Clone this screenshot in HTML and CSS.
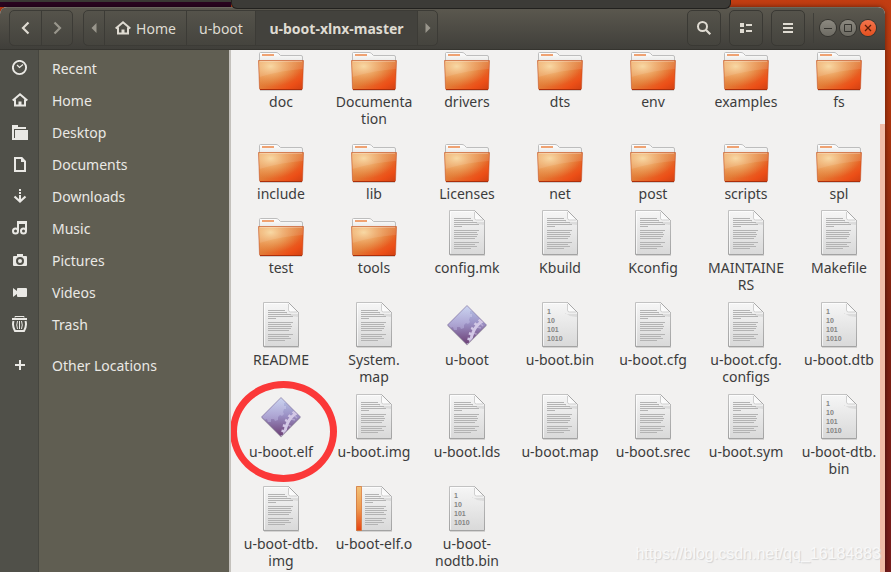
FILE: index.html
```
<!DOCTYPE html>
<html lang="en">
<head>
<meta charset="utf-8">
<title>u-boot-xlnx-master</title>
<link rel="stylesheet" href="styles.css">
</head>
<body>
<svg class="defs" width="0" height="0" aria-hidden="true">
  <defs>
    <linearGradient id="gFolder" x1="0" y1="0" x2="1" y2="1"><stop offset="0" stop-color="#eda05c"/><stop offset=".5" stop-color="#e27a35"/><stop offset=".8" stop-color="#ec4f17"/><stop offset="1" stop-color="#d04012"/></linearGradient>
    <radialGradient id="gGlow" cx=".27" cy=".2" r=".7"><stop offset="0" stop-color="#f7d59b"/><stop offset="1" stop-color="#f0a45c" stop-opacity="0"/></radialGradient>
    <linearGradient id="gTab" x1="0" y1="0" x2="0" y2="1"><stop offset="0" stop-color="#fff"/><stop offset="1" stop-color="#dededc"/></linearGradient>
    <linearGradient id="gPage" x1="0" y1="0" x2="0" y2="1"><stop offset="0" stop-color="#f6f6f6"/><stop offset="1" stop-color="#d9d9d9"/></linearGradient>
    <linearGradient id="gEdge" x1="0" y1="0" x2="0" y2="1"><stop offset="0" stop-color="#c2c2c2"/><stop offset="1" stop-color="#a3a3a3"/></linearGradient>
    <linearGradient id="gCurl" x1="0" y1="1" x2="1" y2="0"><stop offset="0" stop-color="#fff"/><stop offset=".5" stop-color="#f8f8f8"/><stop offset="1" stop-color="#cfcfcf"/></linearGradient>
    <linearGradient id="gSpine" x1="0" y1="0" x2="0" y2="1"><stop offset="0" stop-color="#f2c277"/><stop offset=".5" stop-color="#ee9a50"/><stop offset="1" stop-color="#e64313"/></linearGradient>
    <linearGradient id="gGem" x1="0" y1="0" x2="0" y2="1"><stop offset="0" stop-color="#b9c8ea"/><stop offset=".45" stop-color="#9c92c6"/><stop offset="1" stop-color="#6c3f74"/></linearGradient>
    <linearGradient id="gGear" x1="0" y1="0" x2="0" y2="1"><stop offset="0" stop-color="#e0e8fb"/><stop offset="1" stop-color="#b4abd9"/></linearGradient>
    <clipPath id="cGem"><path d="M24 4.500 43.500 24 24 43.500 4.500 24Z"/></clipPath>
  </defs>
  <symbol id="folder" viewBox="0 0 48 48">
    <path d="M3 47.500h42" stroke="#000" stroke-opacity=".15" stroke-width="1"/>
    <path d="M2.500 22V10.500q0-1 1-1H19q1.500 0 2.500 1l2 2H44q1.500 0 1.500 1.500V22Z" fill="url(#gTab)" stroke="#bdbdbd"/>
    <path d="M5 11H17V13H5Z" fill="#efa272"/>
    <path d="M1.500 17.500H46.500L45.500 45.500q0 1-1 1H3.500Q2.500 46.500 2.500 45.500Z" fill="url(#gFolder)"/>
    <path d="M1.500 17.500H46.500L45.500 45.500q0 1-1 1H3.500Q2.500 46.500 2.500 45.500Z" fill="url(#gGlow)"/>
    <path d="M2 18H46V26Q26 27 2.500 34Z" fill="#fff" fill-opacity=".1"/>
    <path d="M1.500 17.500H46.500L45.500 45.500q0 1-1 1H3.500Q2.500 46.500 2.500 45.500Z" fill="none" stroke="#bd4318" stroke-opacity=".5"/>
    <path d="M3 18.500H45" stroke="#fff" stroke-opacity=".25"/>
    <path d="M3 46.500H45" stroke="#ac2e0a"/>
  </symbol>
  <symbol id="page" viewBox="0 0 48 48">
    <path d="M7 46.500h35" stroke="#000" stroke-opacity=".12"/>
    <path d="M6.500 1.500H31.500L41.500 11.500V45.500H6.500Z" fill="url(#gPage)" stroke="url(#gEdge)"/>
    <path d="M7.500 44.500V2.500H30" fill="none" stroke="#fff" stroke-opacity=".7"/>
    <path d="M29 4V13H41V16L34 15 29 12Z" fill="#888" fill-opacity=".18"/>
    <path d="M31.500 2V9q0 2 2 2H41.500Z" fill="url(#gCurl)"/>
    <path d="M31.500 1.500 41.500 11.500" stroke="#a8a8a8" fill="none"/>
    <path d="M31.500 3V9q0 2 2 2H40" stroke="#cfcfcf" fill="none"/>
  </symbol>
  <symbol id="text" viewBox="0 0 48 48">
    <use href="#page"/>
    <path d="M11 9.500H28M11 11.500H30M11 13.500H34M11 15.500H36M11 17.500H19M11 21.500H36M11 23.500H34M11 25.500H35M11 27.500H34M11 29.500H32M11 33.500H36M11 35.500H32M11 37.500H34M11 39.500H28" stroke="#b3b3b3"/>
  </symbol>
  <symbol id="object" viewBox="0 0 48 48">
    <use href="#page"/>
    <path d="M6.500 1.500h5v44h-5Z" fill="url(#gSpine)" stroke="#d9702f" stroke-opacity=".7"/>
    <path d="M15 9.500H29M15 11.500H31M15 13.500H34M15 15.500H36M15 17.500H23M15 21.500H36M15 23.500H34M15 25.500H37M15 27.500H34M15 29.500H36M15 33.500H36M15 35.500H32M15 37.500H34M15 39.500H28" stroke="#b3b3b3"/>
  </symbol>
  <symbol id="program" viewBox="0 0 48 48">
    <path d="M24 5.500 43.500 25 24 44.500 4.500 25Z" fill="#000" fill-opacity=".2"/>
    <path d="M24 4.500 43.500 24 24 43.500 4.500 24Z" fill="url(#gGem)"/>
    <g clip-path="url(#cGem)">
      <path d="M4 0H27V7h2v3h-2v3h2v3h-2l-1 3 1 2-2 2-2-1-2 2v3l-3 1-1-2h-3v3h-3l-1-3-3 1v3H4Z" fill="url(#gGear)" fill-opacity=".55"/>
      <path d="M45 18Q29 22 27 45" fill="none" stroke="#d3c8e6" stroke-width="3"/>
      <path d="M43 17Q27 21 25 45" fill="none" stroke="#d3c8e6" stroke-width="3" stroke-dasharray="2.500 3"/>
      <path d="M34 26l4 1M31 32l4 2M37 22l3 3" stroke="#d3c8e6" stroke-width="1.500" stroke-opacity=".5"/>
    </g>
    <path d="M24 4.500 43.500 24 24 43.500 4.500 24Z" fill="none" stroke="#6a5386" stroke-opacity=".5" stroke-linejoin="round"/>
  </symbol>
  <symbol id="house" viewBox="0 0 16 16">
    <path d="M.7 8.500 8 2.300 15.300 8.500M3 7.500V13.500H13V7.500" fill="none" stroke="currentColor" stroke-width="2"/>
    <path d="M6.500 13.500V9.500h3v4Z" fill="currentColor"/>
  </symbol>
</svg>

<div class="topbar"></div>
<div class="panel"></div>
<main class="window">
  <header class="header">
    <div class="group">
      <button class="nav" aria-label="Back"><svg width="16" height="16" viewBox="0 0 16 16"><path d="M10.500 2.500 5 8 10.500 13.500" fill="none" stroke="currentColor" stroke-width="2.200"/></svg></button>
      <button class="nav dim" aria-label="Forward"><svg width="16" height="16" viewBox="0 0 16 16"><path d="M5.500 2.500 11 8 5.500 13.500" fill="none" stroke="currentColor" stroke-width="2.200"/></svg></button>
    </div>
    <nav class="group path">
      <button class="step dim" aria-label="Scroll left"><svg width="6" height="10" viewBox="0 0 6 10"><path d="M5.500 0V10L.5 5Z" fill="currentColor"/></svg></button>
      <button class="crumb home"><svg width="16" height="16"><use href="#house"/></svg>Home</button>
      <button class="crumb parent">u-boot</button>
      <button class="crumb current">u-boot-xlnx-master</button>
      <button class="step dim" aria-label="Scroll right"><svg width="6" height="10" viewBox="0 0 6 10"><path d="M.5 0V10L5.500 5Z" fill="currentColor"/></svg></button>
    </nav>
    <div class="tools">
      <button class="tool" aria-label="Search"><svg width="16" height="16" viewBox="0 0 16 16"><circle cx="6.500" cy="6.500" r="4.500" fill="none" stroke="currentColor" stroke-width="2"/><path d="M9.800 9.800 14.300 14.300" stroke="currentColor" stroke-width="2.200"/></svg></button>
      <button class="tool" aria-label="View"><svg width="16" height="16" viewBox="0 0 16 16"><path d="M2 3h4v4H2ZM2 9h4v4H2ZM8 4h6v2H8ZM8 10h6v2H8Z" fill="currentColor"/></svg></button>
      <button class="tool" aria-label="Menu"><svg width="16" height="16" viewBox="0 0 16 16"><path d="M3 3h10v2H3ZM3 7h10v2H3ZM3 11h10v2H3Z" fill="currentColor"/></svg></button>
    </div>
    <div class="controls">
      <button class="ctl" aria-label="Minimize"><svg width="10" height="10" viewBox="0 0 10 10"><path d="M1 5.500H9" stroke="currentColor"/></svg></button>
      <button class="ctl" aria-label="Maximize"><svg width="10" height="10" viewBox="0 0 10 10"><path d="M1.500 1.500h7v7h-7Z" fill="none" stroke="currentColor"/></svg></button>
      <button class="ctl close" aria-label="Close"><svg width="10" height="10" viewBox="0 0 10 10"><path d="M2 2 8 8M8 2 2 8" stroke="currentColor" stroke-width="1.300"/></svg></button>
    </div>
  </header>
  <div class="body">
    <aside class="sidebar">
      <a class="place" href="#"><svg viewBox="0 0 16 16"><circle cx="7.500" cy="7.500" r="6.600" fill="none" stroke="currentColor" stroke-width="1.900"/><path d="M5 5 7.500 7.500 11 4.500" fill="none" stroke="currentColor" stroke-width="1.200"/></svg>Recent</a>
      <a class="place" href="#"><svg><use href="#house"/></svg>Home</a>
      <a class="place" href="#"><svg viewBox="0 0 16 16"><path d="M0 1H6V3H14V5H2V15H0Z" fill="currentColor"/><path d="M3 6H16V16H0V14H3Z" fill="currentColor"/></svg>Desktop</a>
      <a class="place" href="#"><svg viewBox="0 0 16 16"><path d="M3 2H9.500L13 5.500V15H3Z" fill="none" stroke="currentColor" stroke-width="2"/><path d="M9 1V6H14L10 1Z" fill="currentColor"/></svg>Documents</a>
      <a class="place" href="#"><svg viewBox="0 0 16 16"><path d="M8 1V3M8 4V6M8 7V13" stroke="currentColor" stroke-width="2"/><path d="M2.500 8.500 8 13.500 13.500 8.500" fill="none" stroke="currentColor" stroke-width="2.200"/></svg>Downloads</a>
      <a class="place" href="#"><svg viewBox="0 0 16 16"><path d="M6 11V2H14V11" fill="none" stroke="currentColor" stroke-width="2"/><path d="M6 3H14" stroke="currentColor" stroke-width="2"/><circle cx="3.500" cy="11" r="2.500" fill="none" stroke="currentColor" stroke-width="2"/><circle cx="11.500" cy="11" r="2.500" fill="none" stroke="currentColor" stroke-width="2"/></svg>Music</a>
      <a class="place" href="#"><svg viewBox="0 0 16 16"><path fill-rule="evenodd" d="M5 2H11V4H14Q15 4 15 5V13Q15 14 14 14H2Q1 14 1 13V5Q1 4 2 4H5ZM8 5A4 4 0 1 0 8 13 4 4 0 1 0 8 5Z" fill="currentColor"/><circle cx="8" cy="9" r="2" fill="currentColor"/></svg>Pictures</a>
      <a class="place" href="#"><svg viewBox="0 0 16 16"><path d="M6 4H14Q15 4 15 5V12Q15 13 14 13H6Q5 13 5 12V10L1 13V4L5 7V5Q5 4 6 4Z" fill="currentColor"/></svg>Videos</a>
      <a class="place" href="#"><svg viewBox="0 0 16 16"><path d="M0 3H15" stroke="currentColor" stroke-width="2"/><path d="M3 1.500V.5H12V1.500" fill="none" stroke="currentColor"/><path d="M1.500 5Q0 10 3 15H12Q15 10 13.500 5" fill="none" stroke="currentColor" stroke-width="2"/><path d="M5.500 5Q4 9 5.500 13M7.500 5V13M9.500 5Q11 9 9.500 13" fill="none" stroke="currentColor"/></svg>Trash</a>
      <a class="place other" href="#"><svg viewBox="0 0 16 16"><path d="M8 3V13M3 8H13" stroke="currentColor" stroke-width="2"/></svg>Other Locations</a>
    </aside>
    <section class="content">
      <div class="files">
        <figure class="file"><svg><use href="#folder"/></svg><figcaption>doc</figcaption></figure>
        <figure class="file"><svg><use href="#folder"/></svg><figcaption class="tall">Documenta<br>tion</figcaption></figure>
        <figure class="file"><svg><use href="#folder"/></svg><figcaption>drivers</figcaption></figure>
        <figure class="file"><svg><use href="#folder"/></svg><figcaption>dts</figcaption></figure>
        <figure class="file"><svg><use href="#folder"/></svg><figcaption>env</figcaption></figure>
        <figure class="file"><svg><use href="#folder"/></svg><figcaption>examples</figcaption></figure>
        <figure class="file"><svg><use href="#folder"/></svg><figcaption>fs</figcaption></figure>

        <figure class="file"><svg><use href="#folder"/></svg><figcaption>include</figcaption></figure>
        <figure class="file"><svg><use href="#folder"/></svg><figcaption>lib</figcaption></figure>
        <figure class="file"><svg><use href="#folder"/></svg><figcaption>Licenses</figcaption></figure>
        <figure class="file"><svg><use href="#folder"/></svg><figcaption>net</figcaption></figure>
        <figure class="file"><svg><use href="#folder"/></svg><figcaption>post</figcaption></figure>
        <figure class="file"><svg><use href="#folder"/></svg><figcaption>scripts</figcaption></figure>
        <figure class="file"><svg><use href="#folder"/></svg><figcaption>spl</figcaption></figure>

        <figure class="file"><svg><use href="#folder"/></svg><figcaption>test</figcaption></figure>
        <figure class="file"><svg><use href="#folder"/></svg><figcaption>tools</figcaption></figure>
        <figure class="file"><svg><use href="#text"/></svg><figcaption>config.mk</figcaption></figure>
        <figure class="file"><svg><use href="#text"/></svg><figcaption>Kbuild</figcaption></figure>
        <figure class="file"><svg><use href="#text"/></svg><figcaption>Kconfig</figcaption></figure>
        <figure class="file"><svg><use href="#text"/></svg><figcaption class="tall">MAINTAINE<br>RS</figcaption></figure>
        <figure class="file"><svg><use href="#text"/></svg><figcaption>Makefile</figcaption></figure>

        <figure class="file"><svg><use href="#text"/></svg><figcaption>README</figcaption></figure>
        <figure class="file"><svg><use href="#text"/></svg><figcaption class="tall">System.<br>map</figcaption></figure>
        <figure class="file"><svg><use href="#program"/></svg><figcaption>u-boot</figcaption></figure>
        <figure class="file"><svg class="bits"><use href="#page"/><text x="11" y="13">1</text><text x="11" y="22">10</text><text x="11" y="31">101</text><text x="11" y="40">1010</text></svg><figcaption>u-boot.bin</figcaption></figure>
        <figure class="file"><svg><use href="#text"/></svg><figcaption>u-boot.cfg</figcaption></figure>
        <figure class="file"><svg><use href="#text"/></svg><figcaption class="tall">u-boot.cfg.<br>configs</figcaption></figure>
        <figure class="file"><svg class="bits"><use href="#page"/><text x="11" y="13">1</text><text x="11" y="22">10</text><text x="11" y="31">101</text><text x="11" y="40">1010</text></svg><figcaption>u-boot.dtb</figcaption></figure>

        <figure class="file marked"><svg><use href="#program"/></svg><figcaption>u-boot.elf</figcaption></figure>
        <figure class="file"><svg><use href="#text"/></svg><figcaption>u-boot.img</figcaption></figure>
        <figure class="file"><svg><use href="#text"/></svg><figcaption>u-boot.lds</figcaption></figure>
        <figure class="file"><svg><use href="#text"/></svg><figcaption>u-boot.map</figcaption></figure>
        <figure class="file"><svg><use href="#text"/></svg><figcaption>u-boot.srec</figcaption></figure>
        <figure class="file"><svg><use href="#text"/></svg><figcaption>u-boot.sym</figcaption></figure>
        <figure class="file"><svg class="bits"><use href="#page"/><text x="11" y="13">1</text><text x="11" y="22">10</text><text x="11" y="31">101</text><text x="11" y="40">1010</text></svg><figcaption class="tall">u-boot-dtb.<br>bin</figcaption></figure>

        <figure class="file"><svg><use href="#text"/></svg><figcaption class="tall">u-boot-dtb.<br>img</figcaption></figure>
        <figure class="file"><svg><use href="#object"/></svg><figcaption>u-boot-elf.o</figcaption></figure>
        <figure class="file"><svg class="bits"><use href="#page"/><text x="11" y="13">1</text><text x="11" y="22">10</text><text x="11" y="31">101</text><text x="11" y="40">1010</text></svg><figcaption class="tall">u-boot-<br>nodtb.bin</figcaption></figure>
      </div>
      <div class="scrollbar"></div>
      <div class="watermark">https://blog.csdn.net/qq_16184883</div>
    </section>
  </div>
</main>
</body>
</html>
```

FILE: styles.css
```
*,
*::after {
  box-sizing: border-box;
}

body {
  margin: 0;
  height: 100vh;
  display: flex;
  flex-direction: column;
  overflow: hidden;
  position: relative;
  background: linear-gradient(#c23d12 0, #ab350d 20%, #7c2010 55%, #751c1c 100%);
  font: 14px/17px "Noto Sans", sans-serif;
  color: #3c3c3c;
}

button {
  margin: 0;
  padding: 0;
  border: 0;
  background: none;
  font: inherit;
  color: inherit;
  display: flex;
  align-items: center;
  justify-content: center;
}

.defs {
  position: absolute;
}

.topbar {
  flex: none;
  height: 7px;
  width: 231px;
  background: linear-gradient(#3a3934 2px, #2a0520 2px);
}

.panel {
  position: absolute;
  z-index: 2;
  left: 231px;
  right: 160px;
  top: 0;
  height: 9px;
  background: #3c3b37;
  border: 1px solid #22211e;
  border-top: 0;
  border-radius: 0 0 6px 6px;
}

.window {
  flex: 1;
  min-height: 0;
  margin-right: 6px;
  display: flex;
  flex-direction: column;
  border-radius: 7px 7px 0 0;
  overflow: hidden;
  background: #f2f1f0;
  box-shadow: 0 0 5px rgba(0, 0, 0, .5);
}

.header {
  flex: none;
  height: 43px;
  padding: 3px 9px 4px;
  display: flex;
  align-items: center;
  background: linear-gradient(#5b584f, #403f3a);
  border-top: 1px solid #6b685e;
  border-bottom: 1px solid #35342f;
  color: #dfdbd2;
}

.group {
  display: flex;
  height: 36px;
  border: 1px solid #3c3b36;
  border-radius: 5px;
  background: linear-gradient(#55534b, #45443e);
  overflow: hidden;
  margin-right: 10px;
}

.group button + button {
  border-left: 1px solid #3c3b36;
}

.nav {
  width: 31px;
}

.dim {
  color: #99968c;
}

.step {
  width: 20px;
}

.crumb {
  gap: 5px;
}

.home {
  width: 82px;
}

.parent {
  width: 69px;
}

.current {
  width: 162px;
  background: #43423d;
  font-weight: bold;
}

.tools {
  display: flex;
  gap: 8px;
  margin-left: auto;
}

.tool {
  width: 34px;
  height: 36px;
  border: 1px solid #3a3934;
  border-radius: 5px;
  background: linear-gradient(#55534b, #45443e);
}

.controls {
  display: flex;
  gap: 4px;
  align-items: center;
  height: 30px;
  margin-left: 8px;
  padding-left: 6px;
  border-left: 1px solid #403f3a;
}

.ctl {
  width: 16px;
  height: 16px;
  border-radius: 50%;
  background: linear-gradient(#8c8980, #6d6b63);
  box-shadow: 0 0 0 1px #35342f;
  color: #35342f;
}

.close {
  background: linear-gradient(#f4744c, #e4501f);
  color: #5a1d08;
}

.body {
  flex: 1;
  min-height: 0;
  display: flex;
}

.sidebar {
  flex: none;
  width: 231px;
  padding-top: 2px;
  border-right: 2px solid #c4c1bc;
  background: linear-gradient(90deg, #505049 38px, #46463f 38px, #46463f 39px, #605e52 39px);
}

.place {
  display: flex;
  align-items: center;
  height: 32px;
  padding-left: 12px;
  gap: 24px;
  color: #eae9e5;
  text-decoration: none;
}

.place svg {
  width: 16px;
  height: 16px;
}

.other {
  margin-top: 9px;
}

.content {
  flex: 1;
  min-width: 0;
  position: relative;
  overflow: hidden;
  background: #f2f1f0;
}

.files {
  margin-top: -7px;
  padding: 0 4px 0 8px;
  display: grid;
  grid-template-columns: repeat(7, 1fr);
  column-gap: 9px;
  row-gap: 7px;
}

.file {
  margin: 0;
  min-width: 0;
  display: flex;
  flex-direction: column;
  align-items: center;
  gap: 2px;
  text-align: center;
  white-space: nowrap;
  position: relative;
}

.file svg {
  width: 48px;
  height: 48px;
}

.bits text {
  font: bold 7px "Liberation Sans", sans-serif;
  fill: #848484;
}

.tall {
  min-height: 35px;
}

.marked::after {
  content: "";
  position: absolute;
  left: -9px;
  top: -12px;
  width: 107px;
  height: 101px;
  border: 7px solid #fb3838;
  border-radius: 50%;
}

.scrollbar {
  position: absolute;
  right: 0;
  top: 74px;
  bottom: 0;
  width: 5px;
  background: #f1bda8;
}

.watermark {
  position: absolute;
  right: 4px;
  bottom: 8px;
  font: 16px/20px "Liberation Sans", sans-serif;
  color: #f8f8f8;
  text-shadow: 1px 1px 1px #d2d2d2;
}
```
